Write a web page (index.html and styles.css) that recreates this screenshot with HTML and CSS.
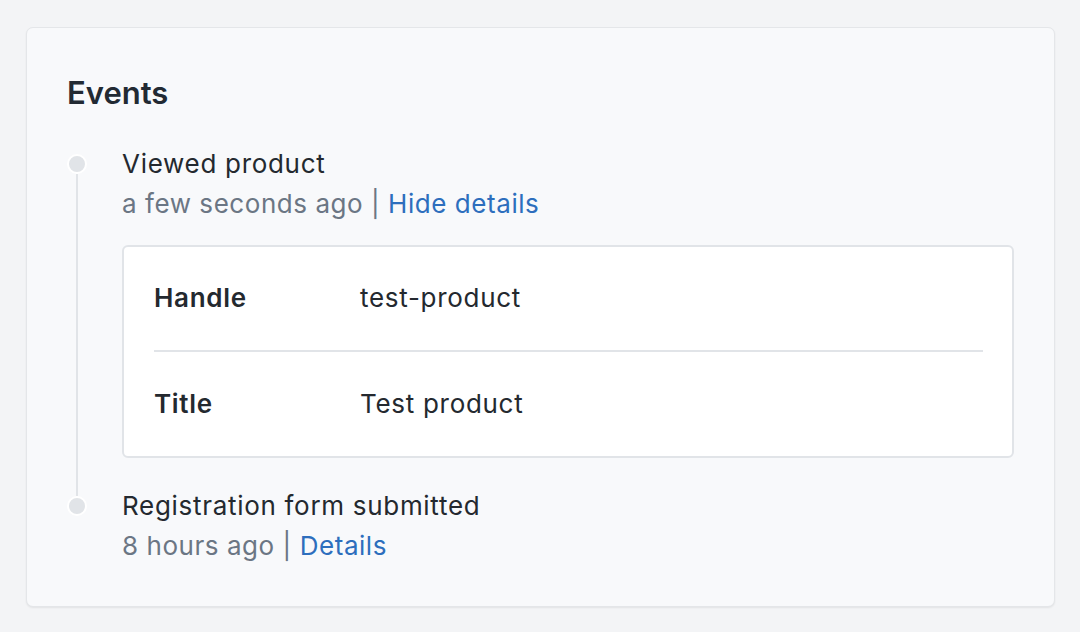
FILE: index.html
```html
<!DOCTYPE html>
<html>
<head>
<meta charset="utf-8">
<meta content="width=device-width, initial-scale=1.0" name="viewport">
<title>Events</title>
<link rel="stylesheet" href="styles.css">
</head>
<body>
<section class="card">
  <h1>Events</h1>
  <ul class="tl">
    <li class="ev">
      <div class="rail"><i class="dot"></i><i class="line"></i></div>
      <div class="body">
        <div class="name">Viewed product</div>
        <div class="meta">a few seconds ago | <a href="#">Hide details</a></div>
        <div class="det">
          <div class="row"><b>Handle</b><span>test-product</span></div>
          <div class="row"><b>Title</b><span>Test product</span></div>
        </div>
      </div>
    </li>
    <li class="ev">
      <div class="rail"><i class="dot"></i></div>
      <div class="body">
        <div class="name">Registration form submitted</div>
        <div class="meta">8 hours ago | <a href="#">Details</a></div>
      </div>
    </li>
  </ul>
</section>
</body>
</html>
```

FILE: styles.css
```css
*{box-sizing:border-box}
body{margin:0;padding:27px 25px 26px 26px;background:#f3f4f6;font-family:Inter,'Noto Sans',sans-serif;color:#24292f}
.card{background:#f8f9fb;border:1px solid #e4e6e9;border-radius:7px;box-shadow:0 1px 2px rgba(0,0,0,.07);padding:45px 40px 40px}
h1{margin:0 0 31px;font-size:31px;line-height:40px;font-weight:600;color:#222a33}
.tl{list-style:none;margin:0;padding:0}
.ev{display:flex}
.rail{width:20px;margin-right:35px;display:flex;flex-direction:column;align-items:center}
.dot{display:block;width:20px;height:20px;margin-top:10px;border-radius:50%;background:#e1e4e8;border:2px solid #fff;flex:none}
.line{display:block;width:2px;flex:1;background:#e1e4e8;margin-bottom:-10px}
.body{flex:1}
.name,.meta,.row{font-size:26px;line-height:40px;letter-spacing:.7px}
.meta{color:#6b7684;letter-spacing:.55px}
.meta a{color:#2d6ebd;text-decoration:none}
.det{margin:21px 0 28px;background:#fff;border:2px solid #e1e4e8;border-radius:6px;padding:0 29px 0 30px}
.row{display:flex;align-items:center;padding:31px 0 32px}
.row+.row{border-top:2px solid #e1e4e8;padding:32px 0 32px}
.row b{width:206px;font-weight:600}
```
